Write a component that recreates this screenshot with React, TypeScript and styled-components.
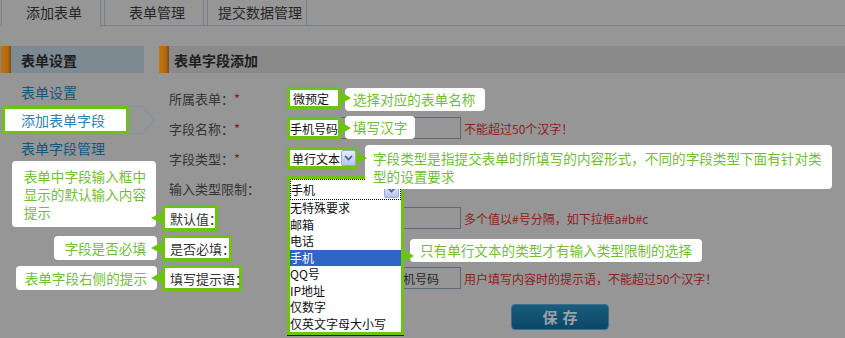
import React from 'react';
import styled, { createGlobalStyle } from 'styled-components';

const GREEN = '#6cc312';
const GREEN_TEXT = '#72bf32';

const Global = createGlobalStyle`
  html, body { margin: 0; padding: 0; background: #969696; }
  body { font-family: "Noto Sans CJK SC", "Noto Sans", sans-serif; }
  * { box-sizing: border-box; }
`;

const Page = styled.div`
  position: relative;
  width: 845px;
  height: 338px;
  overflow: hidden;
  background: #969696;
`;

const TabBar = styled.div`
  display: flex;
  align-items: flex-start;
  height: 26px;
  padding-left: 1px;
  border-bottom: 1px solid #74808a;
`;

const Tab = styled.div<{ $active?: boolean }>`
  width: 100px;
  height: 26px;
  margin-right: 3px;
  margin-bottom: -1px;
  border: 1px solid #74808a;
  border-top: none;
  border-bottom-color: ${p => (p.$active ? '#969696' : '#74808a')};
  display: flex;
  align-items: center;
  justify-content: center;
  padding: 0 0 2px 6px;
  font-size: 14px;
  color: #262626;
`;

const Main = styled.div`
  display: flex;
  padding-top: 20px;
`;

const Sidebar = styled.div`
  width: 144px;
  flex: none;
  margin-right: 15px;
`;

const SectionHead = styled.div<{ $tone: 'blue' | 'gray' }>`
  display: flex;
  align-items: center;
  height: 27px;
  background: ${p => (p.$tone === 'blue' ? '#7e8a92' : '#8a8a8a')};
  font-size: 14px;
  font-weight: 700;
  color: #1d1d1d;
`;

const Bar = styled.span<{ $inset: number }>`
  align-self: stretch;
  width: 10px;
  margin-left: ${p => p.$inset}px;
  background: linear-gradient(to right, #c27410 0%, #b3670d 70%, #7a4a14 100%);
`;

const HeadTitle = styled.span<{ $pad: number }>`
  padding-left: ${p => p.$pad}px;
`;

const SideList = styled.div`
  display: flex;
  flex-direction: column;
  padding-top: 5px;
`;

const SideItem = styled.div`
  height: 28px;
  display: flex;
  align-items: center;
  padding-left: 21px;
  font-size: 14px;
  color: #17587a;
`;

const ActiveItem = styled.div`
  position: relative;
  height: 28px;
  display: flex;
  align-items: center;
`;

const ArrowOutline = styled.svg`
  position: absolute;
  left: 2px;
  top: 0;
`;

const ActiveBox = styled.div`
  position: relative;
  margin-left: 2px;
  width: 127px;
  height: 28px;
  border: 3px solid ${GREEN};
  background: #fff;
  display: flex;
  align-items: center;
  padding-left: 16px;
  font-size: 14px;
  color: #2a83b6;
`;

const Content = styled.div`
  flex: 1;
`;

const Form = styled.div`
  padding-top: 10px;
`;

const Row = styled.div`
  display: flex;
  align-items: center;
  height: 30px;
`;

const Label = styled.div`
  width: 128px;
  flex: none;
  padding-left: 10px;
  font-size: 13px;
  color: #343434;
  white-space: nowrap;
`;

const Star = styled.span`
  color: #8e1818;
`;

const Field = styled.div`
  position: relative;
  display: flex;
  align-items: center;
  height: 100%;
`;

const HiLabel = styled.div<{ $w: number }>`
  position: relative;
  margin-left: -7px;
  width: ${p => p.$w}px;
  height: 26px;
  border: 3px solid ${GREEN};
  background: #fff;
  display: flex;
  align-items: center;
  padding-left: 5px;
  font-size: 13px;
  color: #333;
  white-space: nowrap;
`;

const HiBox = styled.div<{ $w: number; $pad: number }>`
  position: relative;
  width: ${p => p.$w}px;
  height: 22px;
  border: 3px solid ${GREEN};
  background: #fff;
  display: flex;
  align-items: center;
  padding-left: ${p => p.$pad}px;
  font-size: 12px;
  color: #111;
  white-space: nowrap;
`;

const HiOverlay = styled(HiBox)`
  position: absolute;
  left: -1px;
  top: -1px;
`;

const Input = styled.div<{ $indent?: number }>`
  position: relative;
  width: 174px;
  height: 22px;
  border: 1px solid #5a6a7b;
  display: flex;
  align-items: center;
  padding-left: ${p => p.$indent ?? 4}px;
  font-size: 12px;
  color: #262626;
  white-space: nowrap;
  overflow: visible;
`;

const Hint = styled.span`
  margin-left: 3px;
  font-size: 12px;
  color: #8e1d1d;
  white-space: nowrap;
`;

const Bubble = styled.div<{
  $side: 'left' | 'right';
  $x: number;
  $y: number;
  $lh: number;
  $pad: string;
}>`
  position: absolute;
  top: ${p => p.$y - 3}px;
  ${p =>
    p.$side === 'right'
      ? `left: calc(100% + ${3 + p.$x}px);`
      : `right: calc(100% + ${3 + p.$x}px);`}
  background: #fff;
  border-radius: 4px;
  color: ${GREEN_TEXT};
  font-size: 13.6px;
  line-height: ${p => p.$lh}px;
  padding: ${p => p.$pad};
  white-space: nowrap;
  z-index: 5;
`;

const Pointer = styled.span<{ $side: 'left' | 'right' }>`
  position: absolute;
  top: 50%;
  transform: translateY(-50%);
  width: 0;
  height: 0;
  border-top: 6px solid transparent;
  border-bottom: 6px solid transparent;
  ${p =>
    p.$side === 'right'
      ? `left: calc(100% + 3px); border-left: 10px solid ${GREEN};`
      : `right: calc(100% + 3px); border-right: 11px solid ${GREEN};`}
  z-index: 6;
`;

const ArrowBtn = styled.span`
  width: 15px;
  height: 16px;
  margin-left: 1px;
  border: 1px solid #97abd8;
  border-radius: 2px;
  background: linear-gradient(#e6ecfb, #b5c6ee);
  display: flex;
  align-items: center;
  justify-content: center;
  flex: none;
`;

const Dropdown = styled.div`
  position: absolute;
  left: 0;
  top: 3px;
  width: 117px;
  height: 159px;
  border: 3px solid ${GREEN};
  background: #fff;
  z-index: 2;
  box-shadow: 0 1px 0 #1e1e1e;
  display: flex;
  flex-direction: column;
`;

const DropSelect = styled.div`
  flex: none;
  height: 21px;
  border: 1px dotted #000;
  display: flex;
  align-items: center;
  justify-content: space-between;
  padding-right: 1px;
  font-size: 12px;
  color: #111;
`;

const Option = styled.div<{ $sel?: boolean }>`
  height: 16.5px;
  line-height: 16.5px;
  font-size: 12px;
  color: ${p => (p.$sel ? '#fff' : '#111')};
  background: ${p => (p.$sel ? '#3165c5' : 'transparent')};
  white-space: nowrap;
`;

const SaveRow = styled.div`
  padding: 11px 0 0 352px;
`;

const SaveButton = styled.button`
  width: 98px;
  height: 26px;
  border: 1px solid #3b6e8c;
  border-radius: 4px;
  background: linear-gradient(#195c7c, #0b4766);
  color: #9ba2a7;
  font-family: inherit;
  font-size: 15px;
  font-weight: 700;
  letter-spacing: 5px;
  padding: 0 0 0 5px;
  line-height: 22px;
`;

const Chevron = () => (
  <svg width="9" height="6" viewBox="0 0 9 6">
    <path d="M1 1 L4.5 4.5 L8 1" fill="none" stroke="#4a5d83" strokeWidth="1.7" />
  </svg>
);

const options = ['无特殊要求', '邮箱', '电话', '手机', 'QQ号', 'IP地址', '仅数字', '仅英文字母大小写'];

export default function App() {
  return (
    <Page>
      <Global />
      <TabBar>
        <Tab $active>添加表单</Tab>
        <Tab>表单管理</Tab>
        <Tab>提交数据管理</Tab>
      </TabBar>
      <Main>
        <Sidebar>
          <SectionHead $tone="blue">
            <Bar $inset={1} />
            <HeadTitle $pad={10}>表单设置</HeadTitle>
          </SectionHead>
          <SideList>
            <SideItem>表单设置</SideItem>
            <ActiveItem>
              <ArrowOutline width="156" height="28" viewBox="0 0 156 28">
                <polygon
                  points="0.5,0.5 140,0.5 152.5,14 140,27.5 0.5,27.5"
                  fill="none"
                  stroke="#7d93a2"
                  strokeWidth="1"
                />
              </ArrowOutline>
              <ActiveBox>添加表单字段</ActiveBox>
            </ActiveItem>
            <SideItem>表单字段管理</SideItem>
          </SideList>
        </Sidebar>
        <Content>
          <SectionHead $tone="gray">
            <Bar $inset={0} />
            <HeadTitle $pad={5}>表单字段添加</HeadTitle>
          </SectionHead>
          <Form>
            <Row>
              <Label>
                所属表单：<Star>*</Star>
              </Label>
              <Field>
                <HiBox $w={54} $pad={3}>
                  微预定
                  <Pointer $side="right" />
                  <Bubble $side="right" $x={4} $y={1} $lh={23} $pad="0 10px 0 8px">
                    选择对应的表单名称
                  </Bubble>
                </HiBox>
              </Field>
            </Row>
            <Row>
              <Label>
                字段名称：<Star>*</Star>
              </Label>
              <Field>
                <Input>
                  <HiOverlay $w={54} $pad={0}>
                    手机号码
                    <Pointer $side="right" />
                    <Bubble $side="right" $x={4} $y={-1} $lh={23} $pad="0 8px 0 8px">
                      填写汉字
                    </Bubble>
                  </HiOverlay>
                </Input>
                <Hint>不能超过50个汉字！</Hint>
              </Field>
            </Row>
            <Row>
              <Label>
                字段类型：<Star>*</Star>
              </Label>
              <Field>
                <HiBox $w={70} $pad={2}>
                  单行文本
                  <ArrowBtn>
                    <Chevron />
                  </ArrowBtn>
                  <Pointer $side="right" />
                  <Bubble $side="right" $x={8} $y={-2} $lh={18} $pad="4px 10px 4px 8px">
                    字段类型是指提交表单时所填写的内容形式，不同的字段类型下面有针对类
                    <br />
                    型的设置要求
                  </Bubble>
                </HiBox>
              </Field>
            </Row>
            <Row>
              <Label>输入类型限制：</Label>
              <Field>
                <Dropdown>
                  <DropSelect>
                    手机
                    <ArrowBtn>
                      <Chevron />
                    </ArrowBtn>
                  </DropSelect>
                  {options.map(o => (
                    <Option key={o} $sel={o === '手机'}>
                      {o}
                    </Option>
                  ))}
                  <Pointer $side="right" />
                  <Bubble $side="right" $x={6} $y={63} $lh={23} $pad="0 10px 0 10px">
                    只有单行文本的类型才有输入类型限制的选择
                  </Bubble>
                </Dropdown>
              </Field>
            </Row>
            <Row>
              <Label>
                <HiLabel $w={56}>
                  默认值：
                  <Pointer $side="left" />
                  <Bubble $side="left" $x={6} $y={-44} $lh={18} $pad="6px 10px 6px 12px">
                    表单中字段输入框中
                    <br />
                    显示的默认输入内容
                    <br />
                    提示
                  </Bubble>
                </HiLabel>
              </Label>
              <Field>
                <Input />
                <Hint>多个值以#号分隔，如下拉框a#b#c</Hint>
              </Field>
            </Row>
            <Row>
              <Label>
                <HiLabel $w={70}>
                  是否必填：
                  <Pointer $side="left" />
                  <Bubble $side="left" $x={5} $y={1} $lh={24} $pad="0 11px 0 10px">
                    字段是否必填
                  </Bubble>
                </HiLabel>
              </Label>
              <Field />
            </Row>
            <Row>
              <Label>
                <HiLabel $w={80}>
                  填写提示语：
                  <Pointer $side="left" />
                  <Bubble $side="left" $x={5} $y={1} $lh={24} $pad="0 10px 0 9px">
                    表单字段右侧的提示
                  </Bubble>
                </HiLabel>
              </Label>
              <Field>
                <Input $indent={103}>手机号码</Input>
                <Hint>用户填写内容时的提示语，不能超过50个汉字！</Hint>
              </Field>
            </Row>
          </Form>
          <SaveRow>
            <SaveButton>保存</SaveButton>
          </SaveRow>
        </Content>
      </Main>
    </Page>
  );
}
